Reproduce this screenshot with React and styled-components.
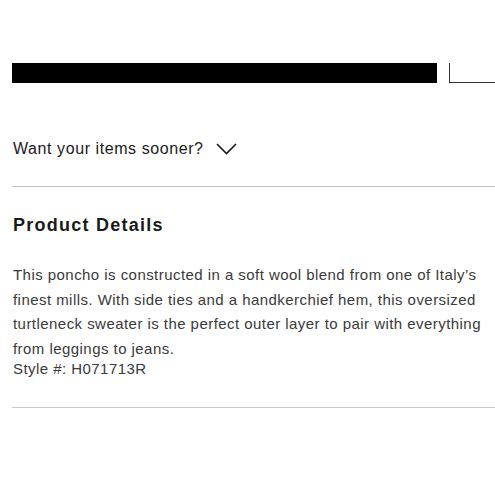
import React from "react";
import styled, { createGlobalStyle } from "styled-components";

const Global = createGlobalStyle`
  body {
    margin: 0;
    background: #fff;
    font-family: "Liberation Sans", Arial, sans-serif;
    color: #1a1a1a;
  }
`;

const App = () => {
  return (
    <Page>
      <Global />
      <BarRow>
        <Bar />
        <Box />
      </BarRow>
      <Toggle>
        Want your items sooner?
        <svg width="21" height="12" viewBox="0 0 21 12" fill="none">
          <path d="M1 1l9.5 9.5L20 1" stroke="#1a1a1a" strokeWidth="1.6" />
        </svg>
      </Toggle>
      <Divider $top={26} />
      <Title>Product Details</Title>
      <Body>
        This poncho is constructed in a soft wool blend from one of Italy’s
        <br />
        finest mills. With side ties and a handkerchief hem, this oversized
        <br />
        turtleneck sweater is the perfect outer layer to pair with everything
        <br />
        from leggings to jeans.
      </Body>
      <StyleNo>Style #: H071713R</StyleNo>
      <Divider $top={27} />
    </Page>
  );
};

export default App;

const Page = styled.div`
  padding: 63px 0 0 12px;
  overflow: hidden;
  width: 483px;
`;

const BarRow = styled.div`
  display: flex;
  gap: 12px;
  height: 20px;
`;

const Bar = styled.div`
  flex: 0 0 425px;
  height: 20px;
  background: #000;
`;

const Box = styled.div`
  flex: 1 1 auto;
  min-width: 0;
  height: 20px;
  box-sizing: border-box;
  border-left: 1.5px solid #333;
  border-bottom: 1.5px solid #333;
`;

const Toggle = styled.div`
  display: flex;
  align-items: center;
  gap: 12px;
  margin-top: 55px;
  height: 22px;
  font-size: 16px;
  letter-spacing: 0.58px;
  padding-left: 1px;
`;

const Divider = styled.div`
  height: 1px;
  background: #c8c8c8;
  margin-top: ${(p) => p.$top}px;
`;

const Title = styled.h2`
  margin: 26px 0 0 1px;
  font-size: 18px;
  font-weight: bold;
  line-height: 24px;
  letter-spacing: 1.25px;
`;

const Body = styled.p`
  margin: 26px 0 0 1px;
  font-size: 15px;
  line-height: 24.5px;
  letter-spacing: 0.45px;
  white-space: nowrap;
  color: #3a3a3a;
`;

const StyleNo = styled.div`
  font-size: 15px;
  line-height: 22px;
  letter-spacing: 0.45px;
  color: #3a3a3a;
  margin: -3px 0 0 1px;
`;
